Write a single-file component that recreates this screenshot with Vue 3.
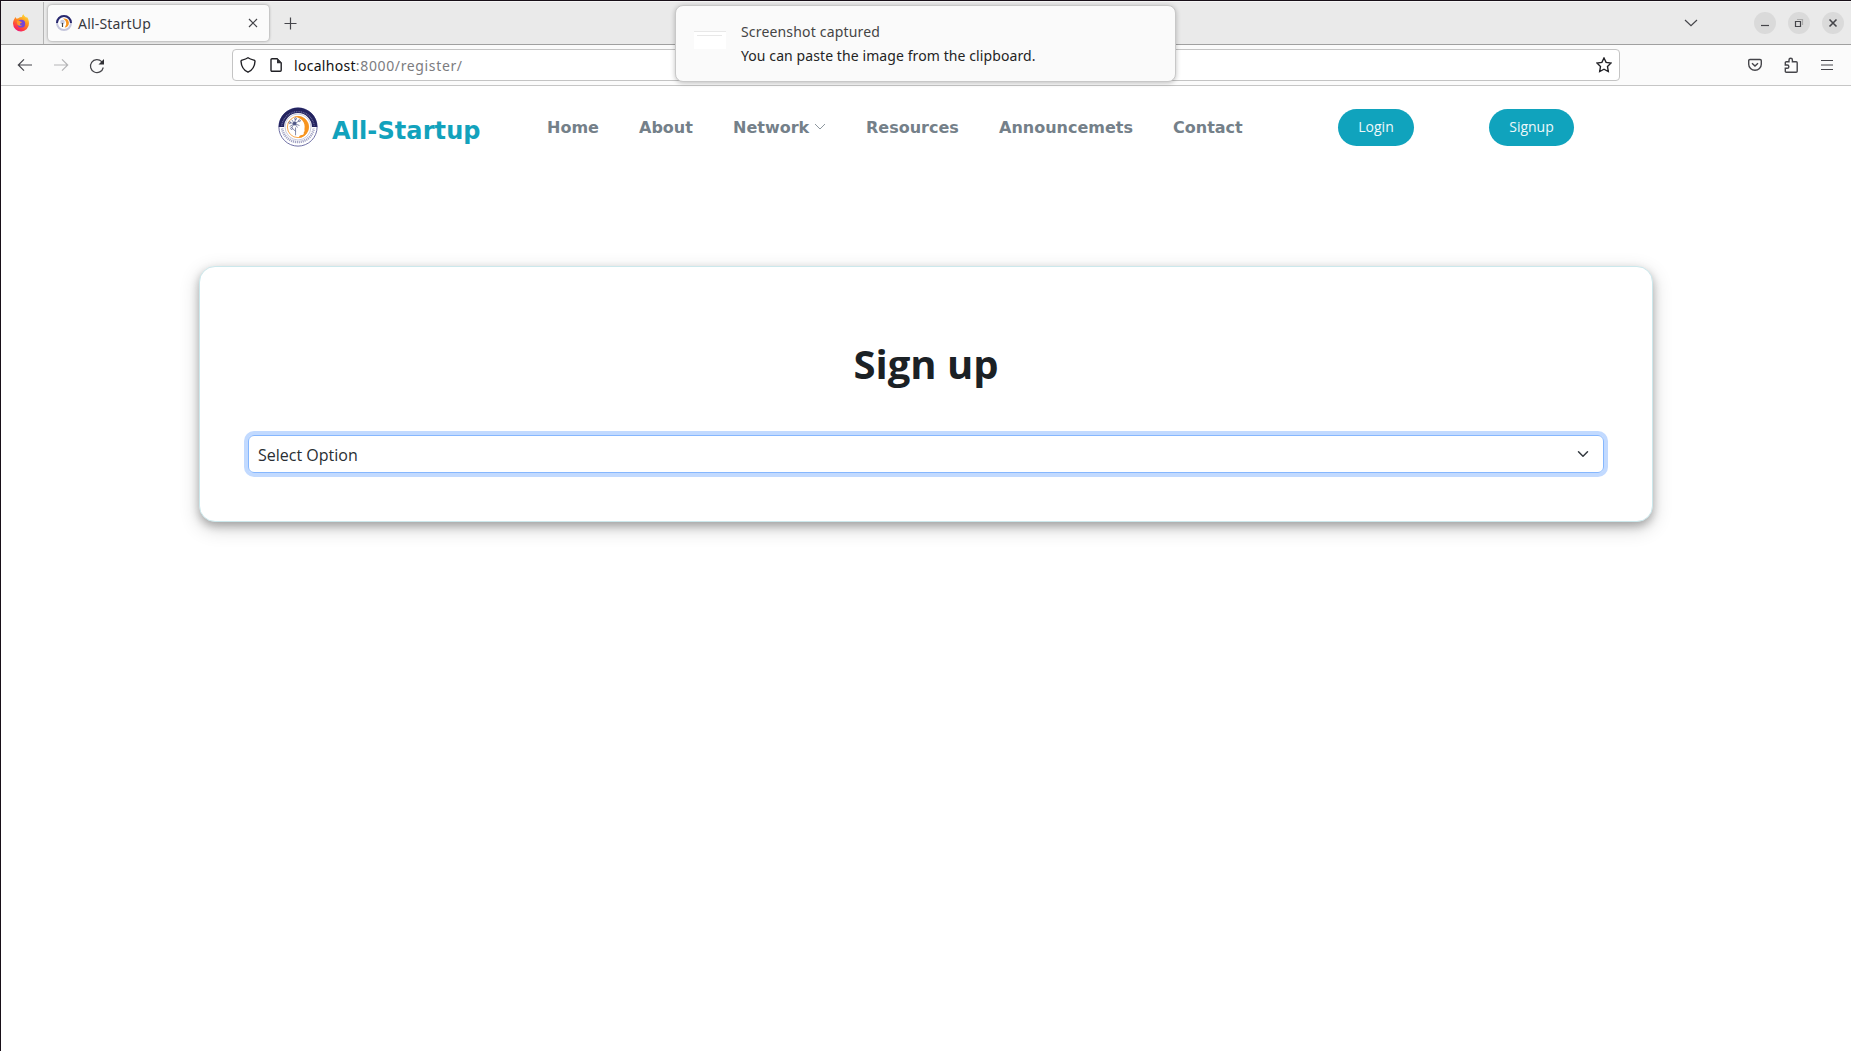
<script setup>
const links = [
  { label: 'Home', width: 52 },
  { label: 'About', width: 54 },
  { label: 'Network', width: 93, menu: true },
  { label: 'Resources', width: 93 },
  { label: 'Announcemets', width: 134 },
  { label: 'Contact', width: 70 },
]
</script>

<template>
  <div class="window">
    <div class="tabs">
      <div class="pinned">
        <svg width="18" height="18" viewBox="0 0 18 18">
          <defs>
            <linearGradient id="fox" x1=".8" y1="0" x2=".25" y2="1">
              <stop offset="0" stop-color="#ffe43a" />
              <stop offset=".45" stop-color="#ff8a1c" />
              <stop offset=".8" stop-color="#ff3647" />
              <stop offset="1" stop-color="#e31587" />
            </linearGradient>
          </defs>
          <path fill="url(#fox)" d="M10 3c.1-1.300.7-2.300 1.600-2.800.3 1.800 1.800 2.200 2.800 3.600.3-.3.300-.6.300-1C16.200 4.400 17 6.900 17 9.200a8 8 0 0 1-16 .4c0-2.300.8-4 1.700-5.200L3.200 3l1.400 1.800C6 4.400 7 4 7.800 3.200Z" />
          <circle cx="9.300" cy="9.700" r="3.900" fill="#7546d8" />
          <path fill="#ff982b" d="M4.800 7.200c1.200-1 2.600-.7 3.500.2l1.700.5c-.2.900-1.700 1-2 1.800-.2 1 .8 1.500 2 1.100-.6 1.600-3.600 1.300-4.700-.4Z" />
        </svg>
      </div>
      <div class="tab">
        <svg class="favicon" width="16" height="16" viewBox="0 0 16 16">
          <circle cx="8" cy="8" r="7" fill="#fff" stroke="#c4c5dc" stroke-width="2" />
          <path d="M1 8a7 7 0 0 1 14 0" fill="none" stroke="#29296f" stroke-width="2" />
          <path d="M7 3.600a4.600 4.600 0 1 1 1.500 9C11 10 11 6 7 3.600Z" fill="#f7931e" />
          <circle cx="6.500" cy="7" r="2.300" fill="#c7cbe0" />
          <path d="M6.500 8v4" stroke="#9aa0c6" />
        </svg>
        <span class="tab-title">All-StartUp</span>
        <svg class="close" width="10" height="10" viewBox="0 0 10 10"><path d="m1 1 8 8M9 1 1 9" /></svg>
      </div>
      <svg class="plus" width="13" height="13" viewBox="0 0 13 13"><path d="M6.500.5v12M.5 6.500h12" /></svg>
      <svg class="list" width="14" height="8" viewBox="0 0 14 8"><path d="m1 1 6 5.700L13 1" /></svg>
      <div class="controls">
        <span><svg width="10" height="10" viewBox="0 0 10 10"><path d="M1 7.500h8" /></svg></span>
        <span><svg width="10" height="10" viewBox="0 0 10 10"><path d="M1.500 3.500h5v5h-5z" /><path d="M3 1.500h5.500V7" class="back-pane" /></svg></span>
        <span><svg width="10" height="10" viewBox="0 0 10 10"><path d="m1.500 1.500 7 7M8.500 1.500l-7 7" class="bold" /></svg></span>
      </div>
    </div>

    <div class="toolbar">
      <div class="history">
        <svg width="16" height="14" viewBox="0 0 16 14"><path d="M15 7H1.500M7 1.300 1.300 7 7 12.700" /></svg>
        <svg class="dim" width="16" height="14" viewBox="0 0 16 14"><path d="M1 7h13.500M9 1.300 14.700 7 9 12.700" /></svg>
        <svg class="reload" width="16" height="16" viewBox="0 0 16 16"><path d="M14.300 9.500A6.500 6.500 0 1 1 12.700 3.600L14 5" /><path d="M15 1v5.500H9.500Z" class="solid" /></svg>
      </div>
      <div class="address">
        <svg class="shield" width="16" height="16" viewBox="0 0 16 16"><path d="M8 .8C6 2.300 4 2.700 1.800 3.200c-.6.200-.8.500-.8 1.100C1.300 9.500 3.500 13.300 8 15.200c4.500-1.900 6.700-5.700 7-10.900 0-.6-.2-.9-.8-1.100C12 2.700 10 2.300 8 .8Z" class="heavy" /></svg>
        <svg class="doc" width="14" height="16" viewBox="0 0 14 16"><path d="M3 1.800h5l4.200 4.200v7.200a1 1 0 0 1-1 1H3a1 1 0 0 1-1-1V2.800a1 1 0 0 1 1-1Z" class="heavy" /><path d="M8 1v5.300h5Z" class="solid" /></svg>
        <span class="url"><b>localhost</b>:8000/register/</span>
        <svg class="star" width="16" height="16" viewBox="0 0 16 16"><path d="m8 1 2.100 4.400 4.900.7-3.500 3.400.8 5L8 12.200l-4.300 2.300.8-5L1 6.100l4.900-.7Z" class="heavy" /></svg>
      </div>
      <div class="actions">
        <svg width="14" height="14" viewBox="0 0 14 14"><path d="M2 1.500h10c.8 0 1.300.5 1.300 1.300v3.500a6.300 6 0 0 1-12.600 0V2.800c0-.8.5-1.300 1.300-1.300ZM4 5.200 7 8l3-2.800" class="heavy" /></svg>
        <svg width="16" height="16" viewBox="0 0 16 16"><path d="M2.300 8V5.700c0-.6.400-1 1-1H6V2.900a1.700 1.700 0 0 1 3.400 0v1.800h3.800c.6 0 1 .4 1 1v8.600c0 .6-.4 1-1 1H3.300c-.6 0-1-.4-1-1v-3h1.900a1.600 1.600 0 0 0 0-3.300Z" class="heavy" /></svg>
        <svg width="14" height="12" viewBox="0 0 14 12"><path d="M1 1.500h12M1 6h12M1 10.500h12" /></svg>
      </div>
    </div>

    <main>
      <nav>
        <svg class="logo" width="40" height="40" viewBox="0 0 41 41">
          <circle cx="20.500" cy="20.500" r="19.600" fill="#fff" stroke="#6c6da3" />
          <path d="M.7 20.500a19.800 19.800 0 0 1 39.600 0h-5.500a14.300 14.300 0 0 0-28.600 0Z" fill="#23235f" />
          <path d="M4.200 22a16.500 16.500 0 0 0 32.600 0" fill="none" stroke="#a3a4c4" stroke-width="2.600" stroke-dasharray="1.200 .8" />
          <path d="M3.800 19a16.900 16.900 0 0 1 33.400 0" fill="none" stroke="#68689a" stroke-width="1.400" stroke-dasharray="1 .8" />
          <circle cx="20.500" cy="20.500" r="13.300" fill="#fff" stroke="#a3a4c0" stroke-width=".6" />
          <circle cx="20.500" cy="20.500" r="10.900" fill="none" stroke="#f7a64a" stroke-width="1" />
          <path d="M17 10.100a11 11 0 1 1 4.500 21.400c.2-2 1-2.600 3-2.800 2-.1 2.200-1.400 1.900-3 1.400-.5.700-1.600.7-2.600C28.500 15.500 24 11.300 17 10.100Z" fill="#f7941e" />
          <g fill="none" stroke="#4c5685" stroke-width=".7">
            <path d="m17 17-5-1m5 1-3-4m3 4 1-5m-1 5 5-3m-5 3 5 2m-5-2 3 4m-3-4-3 4m3-4-5 3m6 1v8m0-4-3-3" />
            <circle cx="17" cy="17" r="1.500" fill="#4c5685" />
            <circle cx="12" cy="16" r="1" /><circle cx="18" cy="12" r="1" /><circle cx="22" cy="14" r="1" /><circle cx="14" cy="22" r="1" />
          </g>
        </svg>
        <span class="brand">All-Startup</span>
        <ul>
          <li v-for="link in links" :key="link.label" :style="{ width: link.width + 'px' }">
            {{ link.label }}
            <svg v-if="link.menu" width="12" height="8" viewBox="0 0 12 8"><path d="m1 1 5 5 5-5" /></svg>
          </li>
        </ul>
        <button class="login">Login</button>
        <button class="signup">Signup</button>
      </nav>
      <section class="card">
        <h1>Sign up</h1>
        <div class="select">
          <span>Select Option</span>
          <svg width="12" height="12" viewBox="0 0 16 16"><path d="m2 5 6 6 6-6" /></svg>
        </div>
      </section>
    </main>

    <aside class="toast">
      <div class="thumb"></div>
      <div class="message">
        <div class="toast-title">Screenshot captured</div>
        <div class="toast-body">You can paste the image from the clipboard.</div>
      </div>
    </aside>
  </div>
</template>

<style>
body { margin: 0; overflow: hidden; background: #fff; }
</style>

<style scoped>
* { box-sizing: border-box; }
svg { display: block; flex: none; }
.window {
  position: relative;
  width: 1851px;
  height: 1051px;
  border-top: 1px solid #180f18;
  border-left: 1px solid #180f18;
  background: #fff;
  font-family: "Noto Sans", sans-serif;
}
.tabs {
  display: flex;
  align-items: center;
  height: 44px;
  background: #eaeaea;
  border-top: 1px solid #f6f6f6;
  border-bottom: 1px solid #a0a0a0;
}
.tabs path, .toolbar path { fill: none; stroke: #45454a; stroke-width: 1.2; }
.tabs .pinned path { stroke: none; fill: #ff982b; }
.tabs .pinned path:first-of-type { fill: url(#fox); }
.pinned {
  width: 43px;
  height: 100%;
  padding: 12px 0 0 11px;
  border-right: 1px solid #b5b5b5;
}
.tab {
  display: flex;
  align-items: center;
  width: 221px;
  height: 36px;
  margin-left: 4px;
  padding: 0 11px 0 8px;
  border-radius: 4px;
  background: #fbfbfb;
  box-shadow: 0 0 3px rgba(0, 0, 0, .42);
}
.tab .favicon path:nth-of-type(1) { stroke: #29296f; stroke-width: 2; }
.tab .favicon path:nth-of-type(2) { stroke: none; fill: #f7931e; }
.tab-title { margin-left: 6px; font-size: 14px; letter-spacing: .18px; color: #38383d; }
.close { margin-left: auto; }
.plus { margin-left: 15px; }
.list { margin-left: auto; }
.controls { display: flex; gap: 12px; margin: 0 7px 0 56px; }
.controls span { display: grid; place-items: center; width: 22px; height: 22px; border-radius: 50%; background: #dadada; }
.controls .back-pane { stroke: #aaa; }
.controls .bold { stroke-width: 1.6; }
.toolbar {
  display: flex;
  align-items: center;
  height: 41px;
  background: #fbfbfb;
  border-bottom: 1px solid #c6c6c6;
}
.history { display: flex; align-items: center; gap: 20px; width: 231px; padding-left: 16px; }
.reload { margin-top: 1px; }
.toolbar .dim path { stroke: #b5b5b7; }
.toolbar path.solid { fill: #303035; stroke: none; }
.address {
  display: flex;
  align-items: center;
  width: 1388px;
  height: 32px;
  padding: 0 7px;
  border: 1px solid #c4c4c4;
  border-radius: 4px;
  background: #fff;
}
.address path.heavy { stroke: #202025; stroke-width: 1.4; }
.doc { margin-left: 13px; }
.url { margin-left: 11px; font-size: 14px; color: #7c7c80; letter-spacing: .64px; }
.url b { font-weight: 400; color: #111; letter-spacing: .3px; }
.star { margin-left: auto; }
.actions { display: flex; align-items: center; gap: 21px; margin-left: 128px; }
.actions path.heavy { stroke-width: 1.4; }
nav { display: flex; align-items: center; height: 82px; padding-left: 277px; }
.brand {
  width: 215px;
  margin: 7px 0 0 14px;
  color: #12a2bc;
  font: bold 24px "DejaVu Sans", sans-serif;
  letter-spacing: .1px;
}
ul { display: flex; gap: 40px; margin: 0; padding: 0; list-style: none; }
li {
  display: flex;
  align-items: center;
  gap: 5px;
  white-space: nowrap;
  color: #748089;
  font: bold 16px "DejaVu Sans", sans-serif;
}
li path { fill: none; stroke: #8d979e; }
button {
  height: 37px;
  padding: 0 0 2px;
  border: 0;
  border-radius: 19px;
  background: #10a3bd;
  color: #eef8fa;
  font: 14px "Open Sans", sans-serif;
}
.login { width: 76px; margin-left: 95px; }
.signup { width: 85px; margin-left: 75px; }
.card {
  width: 1454px;
  height: 256px;
  margin: 98px 0 0 198px;
  padding: 70px 48px 0;
  border: 1px solid #cce8ec;
  border-radius: 16px;
  background: #fff;
  box-shadow: 0 4px 8px rgba(0, 0, 0, .25), 0 6px 20px rgba(0, 0, 0, .19);
}
h1 { margin: 0; color: #1b2125; text-align: center; font: bold 40px/54px "Open Sans", sans-serif; }
.select {
  display: flex;
  align-items: center;
  justify-content: space-between;
  height: 38px;
  margin-top: 44px;
  padding: 1px 14px 0 9px;
  border: 1px solid #86b7fe;
  border-radius: 6px;
  box-shadow: 0 0 0 4px #c2daff;
  color: #292e33;
  font: 16px "Open Sans", sans-serif;
}
.select svg { margin-bottom: 2px; }
.select path { fill: none; stroke: #343a40; stroke-width: 2; stroke-linecap: round; stroke-linejoin: round; }
.toast {
  position: absolute;
  top: 4px;
  left: 674px;
  display: flex;
  width: 501px;
  height: 77px;
  border: 1px solid #c8c8c8;
  border-radius: 8px;
  background: #fafafa;
  box-shadow: 0 1px 5px rgba(0, 0, 0, .25);
}
.thumb { width: 32px; height: 18px; margin: 25px 15px 0 18px; background: #fff; border-top: 1px solid #e8e8e8; }
.thumb::after { content: ''; display: block; width: 25px; margin: 3px 0 0 3px; border-top: 1px solid #e8e8e8; }
.message { padding-top: 14px; font-size: 14px; line-height: 24px; white-space: nowrap; }
.toast-title { color: #454545; letter-spacing: .17px; }
.toast-body { color: #242424; letter-spacing: .09px; }
</style>
